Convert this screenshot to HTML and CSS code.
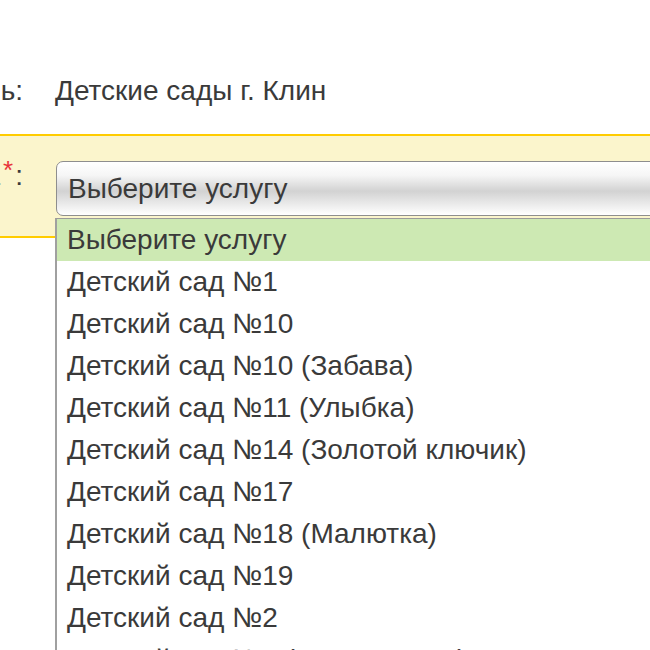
FILE: index.html
```html
<!DOCTYPE html>
<html lang="ru">
<head>
<meta charset="utf-8">
<title>Выбор услуги</title>
<link rel="stylesheet" href="styles.css">
</head>
<body>
<div class="form">
  <div class="row row-info">
    <div class="label"><span>Получатель:</span></div>
    <div class="value">Детские сады г. Клин</div>
  </div>
  <div class="band">
    <div class="row row-select">
      <div class="label label-top"><span>Услуга<sup class="req">*</sup>:</span></div>
      <div class="select">Выберите услугу</div>
    </div>
  </div>
</div>
<ul class="dropdown">
  <li class="option selected">Выберите услугу</li>
  <li class="option">Детский сад №1</li>
  <li class="option">Детский сад №10</li>
  <li class="option">Детский сад №10 (Забава)</li>
  <li class="option">Детский сад №11 (Улыбка)</li>
  <li class="option">Детский сад №14 (Золотой ключик)</li>
  <li class="option">Детский сад №17</li>
  <li class="option">Детский сад №18 (Малютка)</li>
  <li class="option">Детский сад №19</li>
  <li class="option">Детский сад №2</li>
  <li class="option">Детский сад №2 (Колокольчик)</li>
</ul>
</body>
</html>
```
FILE: styles.css
```css
html, body {
  margin: 0;
  padding: 0;
  overflow: hidden;
  background: #ffffff;
}
body {
  font-family: "Liberation Sans", Arial, sans-serif;
  font-size: 28px;
  color: #3a3a3a;
  position: relative;
  width: 650px;
  height: 650px;
}
.form {
  padding-top: 74px;
}
.row {
  display: flex;
  align-items: flex-start;
}
.label {
  width: 23px;
  flex: none;
  display: flex;
  justify-content: flex-end;
  overflow: hidden;
  white-space: nowrap;
  line-height: 34px;
}
.label-top {
  line-height: 30px;
}
.req {
  color: #e8343a;
  font-size: 26px;
  vertical-align: top;
  line-height: 18px;
  margin: 0 2px 0 3px;
}
.row-info {
  gap: 32px;
  line-height: 34px;
}
.value {
  white-space: nowrap;
}
.band {
  margin-top: 26px;
  border-top: 2px solid #ffcc00;
  border-bottom: 2px solid #ffcc00;
  background: #fbf5cc;
  padding: 25px 0 20px 0;
}
.row-select {
  gap: 33px;
}
.select {
  flex: none;
  width: 700px;
  height: 53px;
  line-height: 53px;
  border: 1px solid #8e8e8e;
  border-radius: 7px;
  padding-left: 11px;
  white-space: nowrap;
  background: linear-gradient(to bottom, #ffffff 0%, #f6f6f6 25%, #d2d2d2 55%, #e6e6e6 75%, #ffffff 100%);
  box-shadow: inset 0 1px 0 #ffffff;
}
.dropdown {
  position: absolute;
  top: 218px;
  left: 55px;
  width: 700px;
  margin: 0;
  padding: 0;
  list-style: none;
  background: #ffffff;
  border-top: 1px solid #9a9a9a;
  border-left: 2px solid #a0a0a0;
}
.option {
  height: 42px;
  line-height: 42px;
  padding-left: 10px;
  white-space: nowrap;
}
.option.selected {
  background: #cde9b3;
}
```
